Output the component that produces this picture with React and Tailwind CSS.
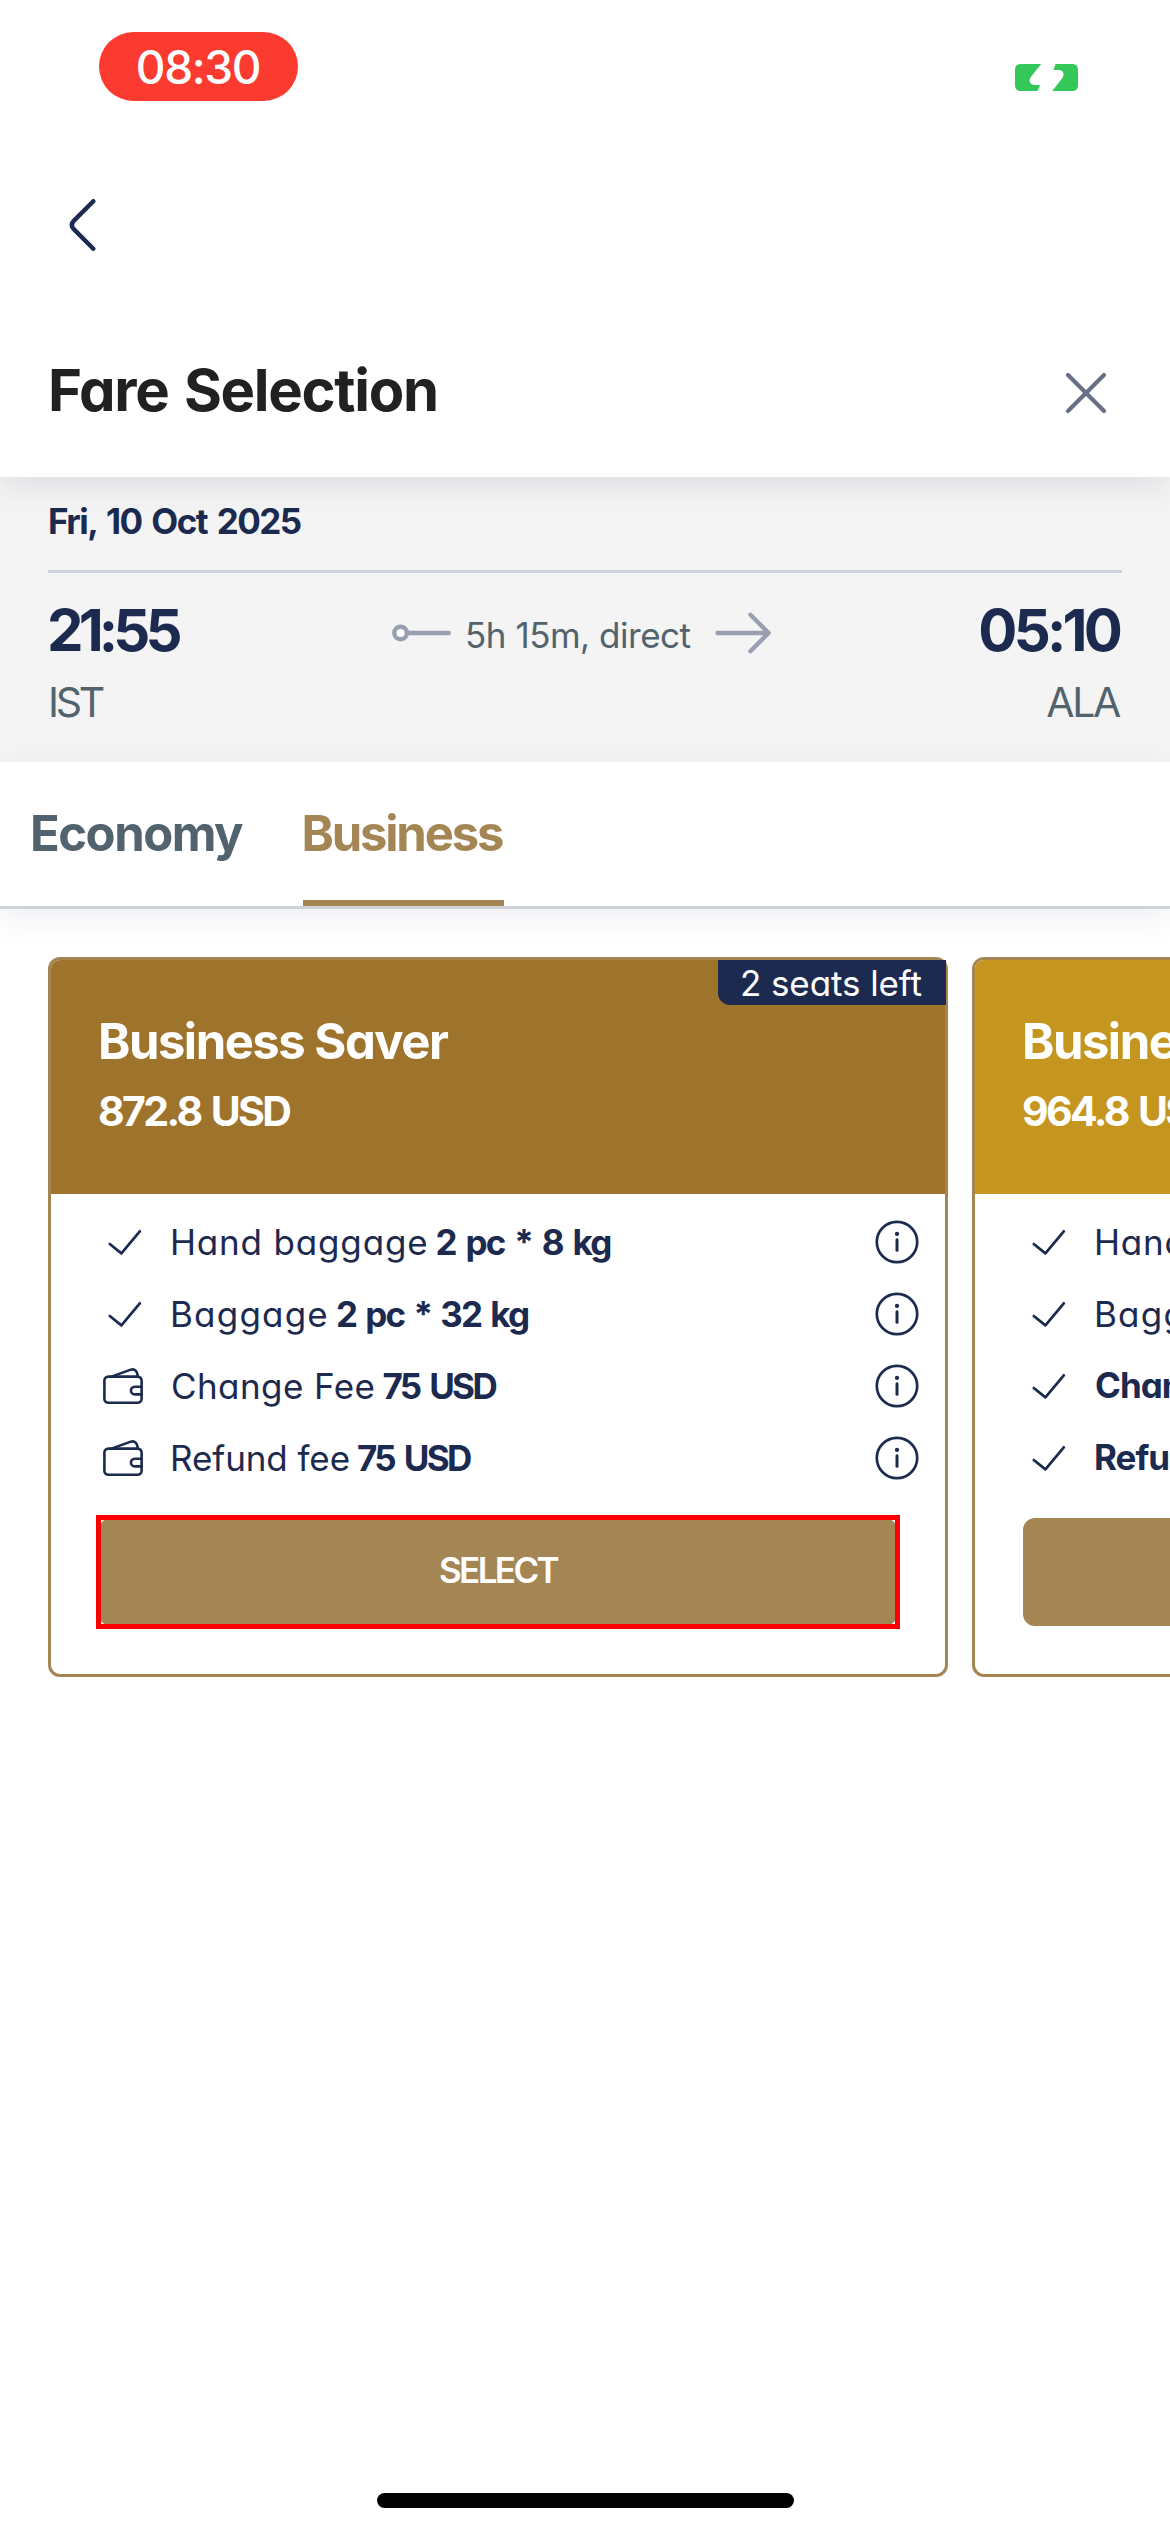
import React from "react";

function CheckIcon() {
  return (
    <svg className="size-10 ml-0.5" viewBox="0 0 40 40" fill="none" stroke="#1c2a4f" strokeWidth="2.7" strokeLinecap="round" strokeLinejoin="round">
      <path d="M4.8 22 16.4 31.4 34.8 9.3" />
    </svg>
  );
}

function WalletIcon() {
  return (
    <svg className="size-10" viewBox="0 0 40 40" fill="none" stroke="#1c2a4f" strokeWidth="2.6" strokeLinecap="round" strokeLinejoin="round">
      <rect x="1.4" y="10.6" width="37.2" height="26.2" rx="4" />
      <path d="M9 10.4 27.2 3.9C30.4 2.8 33 3.6 33.9 6.6L35 10.4" />
      <path d="M38.4 20.7H32C26.6 20.7 26.6 28.4 32 28.4H38.4" />
    </svg>
  );
}

function InfoIcon() {
  return (
    <svg className="size-11" viewBox="0 0 44 44" fill="none" stroke="#1c2a4f" strokeWidth="2.7" strokeLinecap="round">
      <circle cx="22" cy="22" r="20.2" />
      <path d="M22 19.8V30.2" strokeWidth="3" />
      <circle cx="22" cy="13.9" r="2.1" fill="#1c2a4f" stroke="none" />
    </svg>
  );
}

function Feature({ icon, label, value, labelClass }) {
  return (
    <li className="flex h-[72px] items-center pl-[52px] pr-[26px] text-[35px] leading-[44px] text-[#1c2a4f]">
      <span className="flex w-[67px] items-center">{icon === "wallet" ? <WalletIcon /> : <CheckIcon />}</span>
      <span className={labelClass}>{label}</span>
      {value && <span className={value.className}>{value.text}</span>}
      <span className="ml-auto"><InfoIcon /></span>
    </li>
  );
}

const perKg = "ml-[7px] font-bold tracking-[-1.68px] [word-spacing:3px]";
const perKgWide = "ml-[7px] font-bold tracking-[-1.97px] [word-spacing:3px]";
const price = "ml-[7px] font-bold tracking-[-2.64px] [word-spacing:4px]";

const fares = [
  {
    name: "Business Saver",
    price: "872.8 USD",
    header: "bg-[#9e732c]",
    badge: "2 seats left",
    highlighted: true,
    features: [
      { icon: "check", label: "Hand baggage", labelClass: "tracking-[0.83px]", value: { text: "2 pc * 8 kg", className: perKg } },
      { icon: "check", label: "Baggage", labelClass: "tracking-[1.2px]", value: { text: "2 pc * 32 kg", className: perKgWide } },
      { icon: "wallet", label: "Change Fee", labelClass: "ml-px tracking-[0.42px]", value: { text: "75 USD", className: price } },
      { icon: "wallet", label: "Refund fee", labelClass: "tracking-[-0.08px]", value: { text: "75 USD", className: price } },
    ],
  },
  {
    name: "Business Flex",
    price: "964.8 USD",
    header: "bg-[#c5961f]",
    features: [
      { icon: "check", label: "Hand baggage", labelClass: "tracking-[0.83px]", value: { text: "2 pc * 8 kg", className: perKg } },
      { icon: "check", label: "Baggage", labelClass: "tracking-[1.2px]", value: { text: "2 pc * 32 kg", className: perKgWide } },
      { icon: "check", label: "Change", labelClass: "ml-px -mt-0.5 font-bold tracking-[-1px]" },
      { icon: "check", label: "Refund", labelClass: "-mt-0.5 font-bold tracking-[-1px]" },
    ],
  },
];

function FareCard({ fare }) {
  return (
    <article className="h-[720px] w-[900px] shrink-0 rounded-[12px] border-[3px] border-[#a48654] bg-white">
      <header className={`relative h-[234px] rounded-t-[9px] pl-[47px] pt-[52px] text-white ${fare.header}`}>
        <h2 className="text-[49px] font-bold leading-[60px] tracking-[-1.5px]">{fare.name}</h2>
        <p className="mt-[13px] text-[41px] font-bold leading-[52px] tracking-[-2.6px] [word-spacing:3px]">{fare.price}</p>
        {fare.badge && (
          <span className="absolute -right-px top-0 h-[45px] w-[228px] rounded-bl-[12px] bg-[#1c2a4f] pl-[22px] text-[35px] leading-[47px] tracking-[-0.1px]">
            {fare.badge}
          </span>
        )}
      </header>
      <ul className="pt-3">
        {fare.features.map((f) => <Feature key={f.label} {...f} />)}
      </ul>
      <div className="px-12 pt-6">
        <button className="relative flex h-[108px] w-full items-center justify-center rounded-[12px] bg-[#a48654] pb-[3px] text-[35px] font-semibold leading-none tracking-[-2.6px] text-white">
          SELECT
          {fare.highlighted && <span className="absolute -inset-[3px] border-[5px] border-[#fa0000]" />}
        </button>
      </div>
    </article>
  );
}

export default function App() {
  return (
    <div className="flex h-[2532px] w-[1170px] flex-col overflow-hidden bg-white font-[Inter,sans-serif] [font-feature-settings:'cv11']">
      <div className="relative z-10 h-[477px] shrink-0 bg-white shadow-[0_9px_30px_rgba(28,42,79,0.1)]">
        <div className="flex items-start justify-between pl-[98.5px] pr-[92px] pt-8">
          <div className="flex h-[69px] w-[199px] items-center justify-center rounded-full bg-[#fc3b30] text-[46px] font-medium leading-none tracking-[-1.35px] text-white [font-feature-settings:normal]">
            08:30
          </div>
          <svg className="mt-8 h-[27px] w-[63px]" viewBox="0 0 63 27" fill="#34c759">
            <path d="M6 0H26.2L16.4 12.2C13 16.6 15 21 19.4 21H25L22.6 27H6C2 27 0 25 0 21V6C0 2 2 0 6 0Z" />
            <path d="M40.6 0H57C61 0 63 2 63 6V21C63 25 61 27 57 27H37.2L46.8 14.8C50.2 10.4 48.4 6 43.8 6H38.4Z" />
          </svg>
        </div>
        <svg className="ml-[68px] mt-[96px] h-14 w-[30px]" viewBox="0 0 30 56" fill="none" stroke="#1c2a4f" strokeWidth="4.4" strokeLinecap="round">
          <path d="M25.3 4.2 6 23.6C3.2 26.4 3.2 29.6 6 32.4L25.3 51.8" />
        </svg>
        <div className="flex items-center justify-between pl-[48px] pr-[62px] pt-[97px]">
          <h1 className="text-[58px] font-bold leading-[80px] tracking-[-1.3px] text-[#212121] [word-spacing:3px]">Fare Selection</h1>
          <svg className="mt-1.5 size-11" viewBox="0 0 44 44" fill="none" stroke="#687085" strokeWidth="4.2" strokeLinecap="round">
            <path d="M4 4 40 40M40 4 4 40" />
          </svg>
        </div>
      </div>

      <section className="h-[285px] shrink-0 bg-[#f4f4f4] px-12 pt-6">
        <p className="h-[69px] text-[35px] font-bold leading-[41px] tracking-[-1.55px] text-[#1c2a4f] [word-spacing:3px]">Fri, 10 Oct 2025</p>
        <div className="h-[3px] bg-[#cdd3d8]" />
        <div className="flex pt-[22px]">
          <div className="w-[343px]">
            <p className="-ml-px text-[58px] font-bold leading-[70px] tracking-[-4.9px] text-[#1c2a4f]">21:55</p>
            <p className="mt-[11px] text-[41px] leading-[52px] tracking-[-3.3px] text-[#52636e]">IST</p>
          </div>
          <div className="flex h-[76px] items-center">
            <svg className="h-11 w-[61px]" viewBox="0 0 61 44" fill="none" stroke="#999eb1" strokeWidth="4.4" strokeLinecap="round">
              <circle cx="9.6" cy="22" r="6.3" fill="#fff" />
              <path d="M17.5 22H57.8" />
            </svg>
            <span className="ml-[13px] mt-[3px] text-[35px] leading-[44px] tracking-[-0.48px] text-[#52636e]">5h 15m, direct</span>
            <svg className="ml-[23px] h-11 w-[58px]" viewBox="0 0 58 44" fill="none" stroke="#999eb1" strokeWidth="4.4" strokeLinecap="round" strokeLinejoin="round">
              <path d="M3.6 22H54.4M36.4 3.8 54.6 22 36.4 40.2" />
            </svg>
          </div>
          <div className="ml-auto mr-[3px] text-right">
            <p className="text-[58px] font-bold leading-[70px] tracking-[-3.8px] text-[#1c2a4f]">05:10</p>
            <p className="mt-[11px] text-[41px] leading-[52px] tracking-[-2.3px] text-[#52636e]">ALA</p>
          </div>
        </div>
      </section>

      <nav className="flex h-[147px] shrink-0 border-b-[3px] border-[#cdd3d8] bg-white pl-[30px] text-[49px] font-bold shadow-[0_9px_30px_rgba(28,42,79,0.08)]">
        <a className="w-[273px] pt-[37px] leading-[70px] tracking-[-1.5px] text-[#52636e]">Economy</a>
        <a className="h-[144px] w-[201px] border-b-[6px] border-[#a48654] pt-[37px] leading-[70px] tracking-[-2.2px] text-[#a48654]">
          <span className="-ml-[1.5px]">Business</span>
        </a>
      </nav>

      <main className="flex gap-6 overflow-hidden pl-12 pt-12">
        {fares.map((fare) => <FareCard key={fare.name} fare={fare} />)}
      </main>

      <div className="mx-auto mb-6 mt-auto h-[15px] w-[417px] rounded-full bg-black" />
    </div>
  );
}
